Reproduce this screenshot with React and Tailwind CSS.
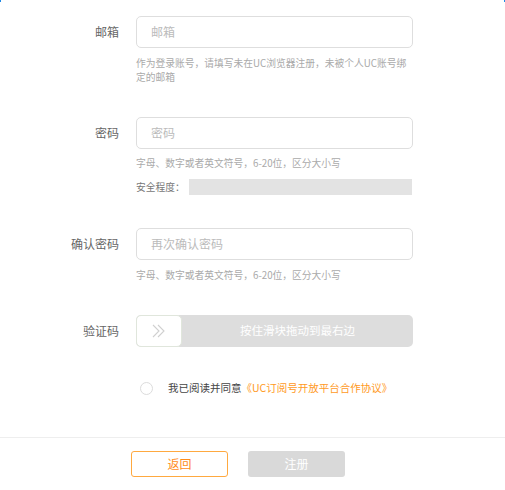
import React from "react";

function Label({ children }) {
  return (
    <div className="w-[119px] shrink-0 text-right text-[12px] leading-[32px] text-[#666] mr-[17px]">
      {children}
    </div>
  );
}

function Input({ placeholder }) {
  return (
    <div className="h-[32px] w-[277px] rounded-[5px] border border-[#dedede] bg-white px-[14px] text-[12px] leading-[30px] text-[#bbb]">
      {placeholder}
    </div>
  );
}

function Hint({ children, className = "" }) {
  return (
    <div className={"text-[9.75px] leading-[14px] text-[#aaa] " + className}>{children}</div>
  );
}

export default function App() {
  return (
    <div
      className="relative h-[490px] w-[505px] overflow-hidden bg-white"
      style={{ fontFamily: '"Noto Sans CJK SC", "Noto Sans", sans-serif' }}
    >
      <div className="absolute left-0 top-0 h-[2px] w-[1px] bg-[#1e88e5]" />
      <div className="absolute right-0 top-0 h-[2px] w-[1px] bg-[#1e88e5]" />

      <div className="pt-[16px]">
        {/* Email */}
        <div className="flex items-start">
          <Label>邮箱</Label>
          <div className="w-[277px]">
            <Input placeholder="邮箱" />
            <Hint className="mt-[8px]">
              作为登录账号，请填写未在UC浏览器注册，未被个人UC账号绑定的邮箱
            </Hint>
          </div>
        </div>

        {/* Password */}
        <div className="mt-[33px] flex items-start">
          <Label>密码</Label>
          <div className="w-[277px]">
            <Input placeholder="密码" />
            <Hint className="mt-[7px]">字母、数字或者英文符号，6-20位，区分大小写</Hint>
            <div className="mt-[9px] flex h-[16px] items-center">
              <span className="w-[53px] shrink-0 text-[9.75px] leading-[16px] text-[#777]">安全程度：</span>
              <div className="h-[16px] w-[223px] bg-[#e3e3e3]" />
            </div>
          </div>
        </div>

        {/* Confirm */}
        <div className="mt-[33px] flex items-start">
          <Label>确认密码</Label>
          <div className="w-[277px]">
            <Input placeholder="再次确认密码" />
            <Hint className="mt-[8px]">字母、数字或者英文符号，6-20位，区分大小写</Hint>
          </div>
        </div>

        {/* Captcha slider */}
        <div className="mt-[33px] flex items-start">
          <Label>验证码</Label>
          <div className="relative flex h-[32px] w-[277px] items-center rounded-[5px] bg-[#dddddd]">
            <div className="flex h-[32px] w-[46px] shrink-0 items-center justify-center rounded-[5px] border border-[#e0e6dc] bg-white">
              <svg width="16" height="14" viewBox="0 0 16 14" fill="none" stroke="#d0d0d0" strokeWidth="1.1">
                <path d="M2 1l6 6-6 6" />
                <path d="M7 1l6 6-6 6" />
              </svg>
            </div>
            <div className="flex-1 text-center text-[11.5px] text-white">按住滑块拖动到最右边</div>
          </div>
        </div>

        {/* Agreement */}
        <div className="mt-[31px] flex h-[20px] items-center pl-[140px]">
          <div className="h-[13px] w-[13px] rounded-full border border-[#dcdcdc] bg-white" />
          <span className="ml-[15px] text-[10.5px] text-[#444]">我已阅读并同意</span>
          <span className="text-[10.5px] text-[#ff9a1e]">《UC订阅号开放平台合作协议》</span>
        </div>

        {/* Divider */}
        <div className="mt-[39px] h-[1px] w-full bg-[#eeeeee]" />

        {/* Buttons */}
        <div className="mt-[13px] flex gap-[20px] pl-[131px]">
          <div className="flex h-[26px] w-[97px] items-center justify-center rounded-[3px] border border-[#ffa940] text-[12px] text-[#ff8c1a]">
            返回
          </div>
          <div className="flex h-[26px] w-[97px] items-center justify-center rounded-[3px] bg-[#d9d9d9] text-[12px] text-white">
            注册
          </div>
        </div>
      </div>
    </div>
  );
}
